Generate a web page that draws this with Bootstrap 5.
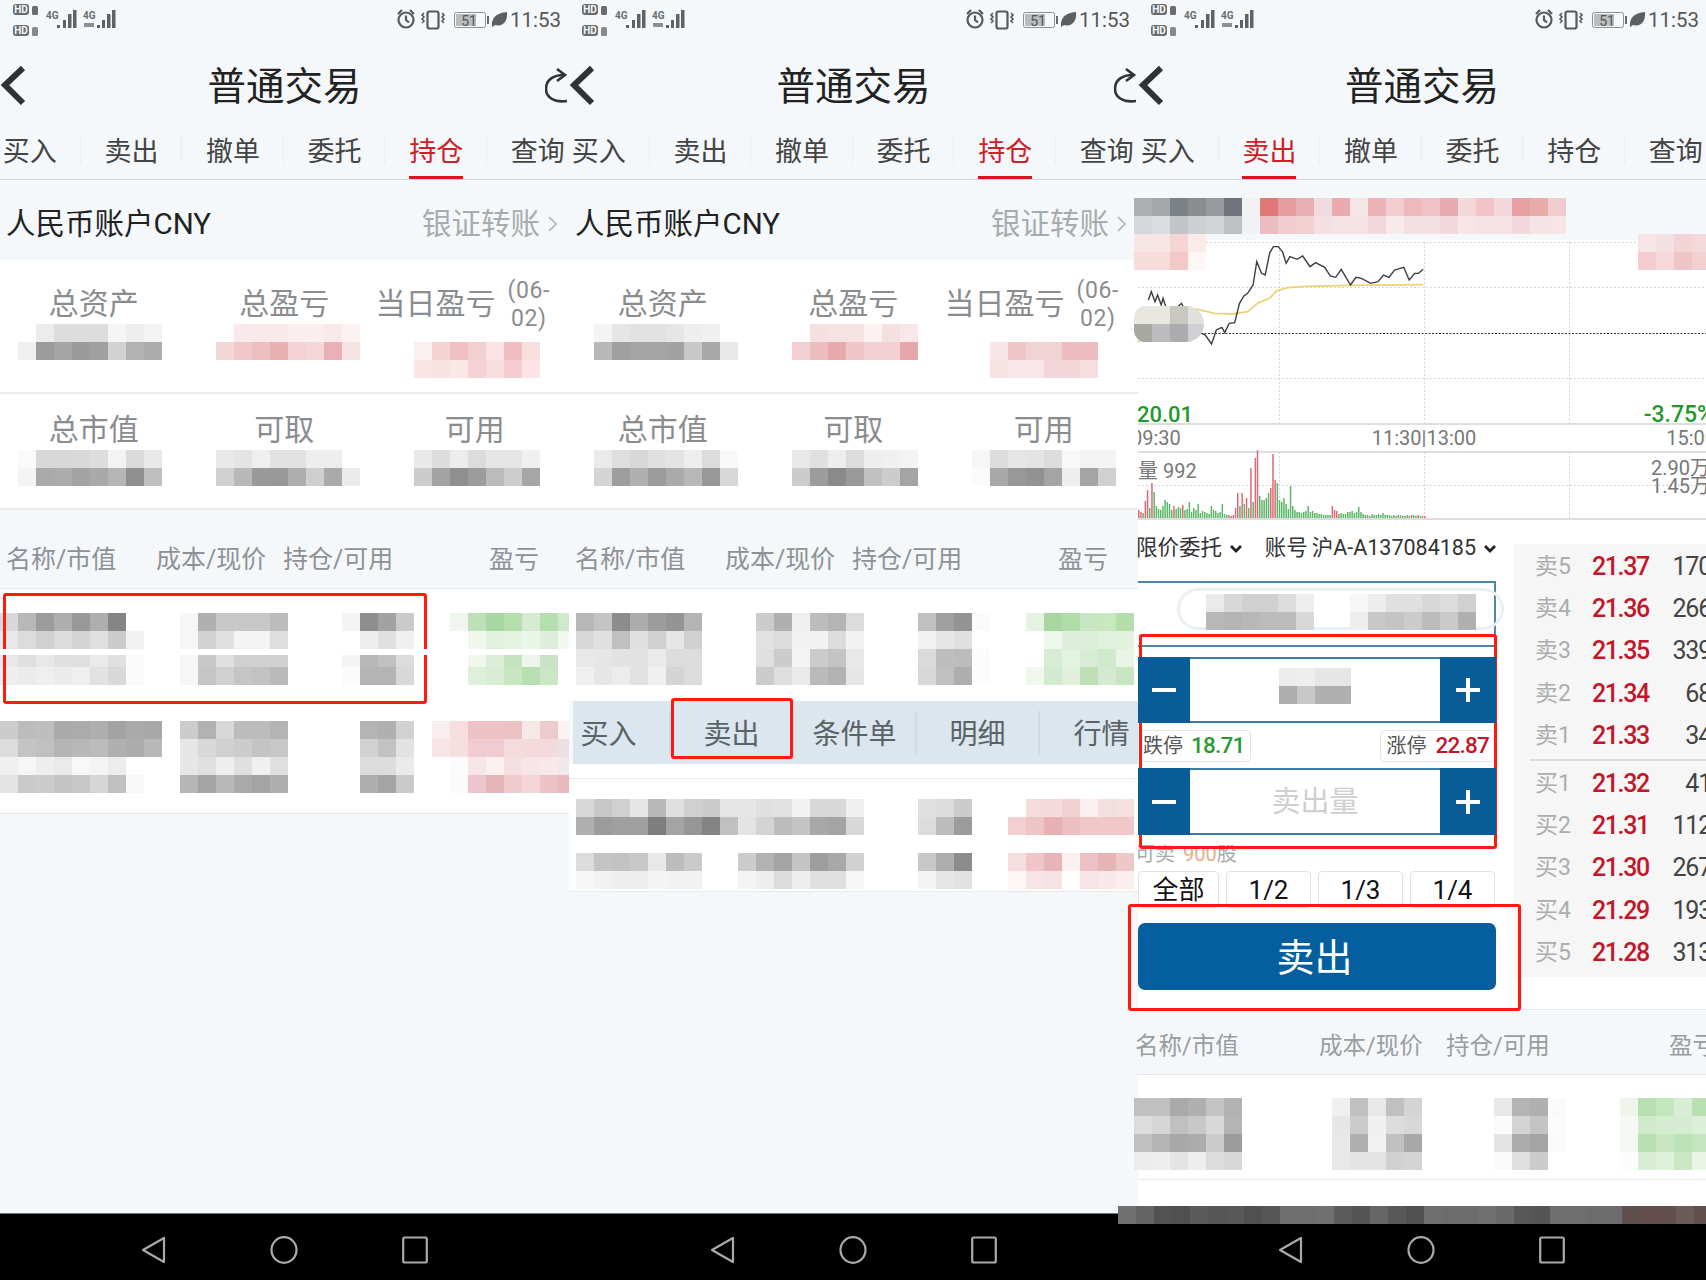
<!DOCTYPE html>
<html lang="zh-CN">
<head>
    <meta charset="UTF-8">
    <title>普通交易</title>
    <meta name="viewport" content="width=device-width, initial-scale=1">
    <link href="https://cdn.jsdelivr.net/npm/bootstrap@5.3.2/dist/css/bootstrap.min.css" rel="stylesheet">
    <style>
        body { margin: 0; background: #000; font-family: Roboto, "Noto Sans CJK SC", sans-serif; }
        .stage { position: relative; width: 1706px; height: 1280px; overflow: hidden; }
        .phone { flex: none; width: 569px; height: 1280px; overflow: hidden; background: #f4f8fb; }
        .phone.last { width: 568px; overflow: visible; }
        .phone-main { height: 1213px; }

        .sbar { height: 46px; }
        .sbar-time { position: absolute; left: 510px; top: 8px; font-size: 20.5px; line-height: 24px; color: #555; }
        .sbar svg { display: block; }
        .sbar-right { left: 394px; }
        .titlebar { height: 80px; display: grid; grid-template-columns: 40px 1fr 40px; align-items: center; }
        .titlebar h1 { margin: 0; padding-top: 2px; font-size: 38.5px; font-weight: 400; color: #222; text-align: center; line-height: 1; }
        .tabs { height: 54px; margin-left: -21px; display: grid; grid-template-columns: repeat(6, 101.6px); border-bottom: 1px solid #d6d9dc; }
        .tab-cell { display: flex; justify-content: center; align-items: stretch; position: relative; font-size: 27px; color: #444; }
        .tab-cell::after { content: ""; position: absolute; right: 0; top: 10px; height: 28px; border-right: 1px solid #eceef0; }
        .tab-cell:last-child::after { display: none; }
        .tab-cell span { display: flex; align-items: center; padding-top: 3px; border-bottom: 3px solid transparent; }
        .tab-cell.on { color: #cf2027; }
        .tab-cell.on span { border-bottom-color: #d7171f; }

        .acct { height: 80px; padding: 8px 11px 0 6px; }
        .acct-name { font-size: 29.5px; color: #222; }
        .acct-link { font-size: 29.5px; color: #a7abae; }
        .sum-card { background: #fff; border-bottom: 2px solid #e8eaec; }
        .sum-a { height: 134px; padding-top: 24px; border-bottom: 2px solid #e8eaec; }
        .sum-b { height: 114px; padding-top: 16px; }
        .sum-labels { height: 40px; margin-left: -1.5px; display: grid; grid-template-columns: repeat(3, 190.5px); font-size: 30px; color: #8a8d90; line-height: 40px; text-align: center; }
        .sum-pair { padding-right: 24px; white-space: nowrap; }
        .sum-date { font-size: 23px; line-height: 28px; width: 48px; margin-top: -7px; margin-left: 12px; letter-spacing: .6px; }
        .strip { display: grid; grid-template-columns: repeat(32, 18px); grid-auto-rows: 18px; }
        .strip i { display: block; }
        .strip.cut::after { content: ""; position: relative; z-index: 1; grid-row: 3; grid-column: 1 / -1; align-self: start; height: 6px; background: #fff; }
        .org2 { margin-left: 7px; }
        .org3 { margin-left: -4px; }

        .list-head { height: 79px; padding: 21px 0 0 6px; display: grid; grid-template-columns: 150px 127px 206px 1fr; align-items: center; font-size: 25px; color: #8e9296; border-bottom: 1px solid #e4e8ec; white-space: nowrap; }
        .list-head.alt { height: 65px; padding: 9px 0 0 0; margin-left: -3px; grid-template-columns: 184px 127px 223px 1fr; font-size: 23.5px; color: #999da1; }
        .pos-row { background: #fff; padding-top: 24px; height: 112px; }
        .pos-row.end { height: 113px; padding-top: 20px; border-bottom: 1px solid #e6e8ea; }
        .act-wrap { margin-left: 4px; height: 63px; background: #dbe6ee; overflow: hidden; }
        .act-bar { margin-left: -25px; height: 63px; display: grid; grid-template-columns: repeat(5, 123px); font-size: 28px; color: #5a6367; align-items: center; text-align: center; }
        .act-bar div { border-right: 2px solid #ced9e1; line-height: 44px; padding-top: 2px; height: 44px; }
        .act-bar div:last-child { border-right: 0; }
        .pos-gap { height: 15px; background: #fff; border-bottom: 1px solid #e6e8ea; }

        .rmark { position: absolute; border: 3px solid #ff1a10; border-radius: 3px; pointer-events: none; }
        .rmark.m1 { left: 3px; top: 593px; width: 424px; height: 111px; }
        .rmark.m2 { left: 671px; top: 698px; width: 122px; height: 61px; }
        .rmark.m3 { left: 1139px; top: 634px; width: 358px; height: 215px; }
        .rmark.m4 { left: 1128px; top: 904px; width: 393px; height: 107px; }

        .head3 { height: 60px; padding-top: 18px; }
        .chart-box { position: relative; height: 280px; background: #fff; }
        .chart-box svg { display: block; }
        .chart-box text { font-family: Roboto, "Noto Sans CJK SC", sans-serif; }
        .over-a { position: absolute; left: -4px; top: -6px; }
        .over-b { position: absolute; left: -4px; top: 66px; width: 70px; overflow: hidden; border-radius: 14px 22px 22px 14px; }
        .form-zone { background: #fff; height: 490px; border-bottom: 1px solid #e6eaee; }
        .form-left { width: 358px; flex: none; }
        .drops { height: 54px; padding-top: 3px; font-size: 21.5px; color: #333; white-space: nowrap; }
        .drops svg { margin-left: 8px; }
        .drop-first { margin-left: -2px; }
        .acc-box { position: relative; height: 66px; width: 358px; border: 2px solid #4a87a8; border-left: 0; padding-top: 11px; margin-top: 7px; }
        .acc-smear { position: absolute; left: 39px; right: -10px; top: 5px; height: 42px; border: 3px solid #e9eff3; border-radius: 21px; }
        .stepper { width: 358px; height: 66px; margin-top: 10px; flex-wrap: nowrap; }
        .stepper.q { margin-top: 6px; height: 67px; }
        .stepper .btn { width: 52px; padding: 0; border: 0; border-radius: 0; background: #085d99; display: flex; align-items: center; justify-content: center; }
        .stepper .btn.plus { width: 56px; }
        .step-mid { flex: 1 1 auto; border: 0; border-top: 2px solid #3d7da3; border-bottom: 2px solid #3d7da3; border-radius: 0; padding: 0 0 8px; display: flex; align-items: center; justify-content: center; background: #fff; }
        .strip-s { grid-template-columns: repeat(4, 18px); }
        .step-ph { padding: 2px 0 0; font-size: 29px; color: #cfcfcf; }
        .limits { margin-top: 7px; height: 32px; width: 358px; font-size: 20px; color: #555; }
        .limit-box { border: 1px solid #e2e4e6; border-radius: 5px; height: 32px; display: flex; align-items: center; padding: 0 6px; gap: 9px; }
        .limit-box.low { border-left: 0; padding-left: 5px; gap: 8px; }
        .limit-box b { font-weight: 500; font-size: 22.5px; letter-spacing: -.8px; }
        .limit-d { color: #2a9a35; }
        .limit-u { color: #c4162a; }
        .avail { margin-top: 10px; height: 19px; font-size: 20px; line-height: 19px; color: #a9a9a9; text-indent: -3px; overflow: hidden; }
        .avail em { font-style: normal; color: #eeaa8c; margin-left: 8px; }
        .ratios { margin-top: 7px; width: 358px; display: grid; grid-template-columns: 81px 85px 85px 85px; column-gap: 7px; }
        .ratios .btn { height: 37px; padding: 2px 0 0; border: 1px solid #e0e2e4; border-radius: 4px; font-size: 26px; line-height: 33px; color: #111; background: #fff; }
        .btn-sell { display: block; margin-top: 15px; width: 358px; height: 67px; padding: 3px 5px 0 0; border: 0; border-radius: 7px; background: #055f9e; color: #fff; font-size: 38px; line-height: 1; }
        .book { margin-top: 24px; margin-left: 18px; width: 192px; height: 433px; background: #f6f6f6; padding: 2px 0 0 21px; overflow: visible; }
        .book-row { height: 42.2px; font-size: 25px; line-height: 42px; white-space: nowrap; }
        .book-row .bk { width: 57px; color: #aaaeb0; font-size: 23px; }
        .book-row .bp { width: 60px; color: #c4162a; font-weight: 500; letter-spacing: -1.4px; }
        .book-row .bq { margin-left: auto; margin-right: -5px; color: #444; letter-spacing: -1.2px; }
        .book-line { height: 2px; margin: 2px 0 2px -5px; background: #dcdcdc; }
        .pos3 { background: #fff; height: 138px; padding-top: 23px; }
        .pos3-line { border-top: 1px solid #e8eaec; margin-top: 9px; }
        .dark-strip { position: absolute; left: 1118px; top: 1206px; grid-template-columns: repeat(33, 18px); }

        .navbar-phone { height: 67px; background: #000; border-top: 1px solid #777; gap: 104px; padding: 6px 2px 0 0; }
        .sym-host { position: absolute; width: 0; height: 0; }
    </style>
</head>
<body>
<svg class="sym-host" aria-hidden="true">
    <symbol id="st-left" viewBox="0 0 120 40">
        <rect x="13" y="4" width="16" height="11" rx="3" fill="#696d70"/>
        <text x="21" y="13" font-size="10" font-weight="700" text-anchor="middle" fill="#f4f8fb" font-family="Roboto">HD</text>
        <rect x="32" y="6" width="6" height="9" rx="1.5" fill="#696d70"/>
        <rect x="13" y="25" width="16" height="11" rx="3" fill="#696d70"/>
        <text x="21" y="34" font-size="10" font-weight="700" text-anchor="middle" fill="#f4f8fb" font-family="Roboto">HD</text>
        <rect x="32" y="27" width="6" height="9" rx="1.5" fill="#85898c"/>
        <text x="46" y="19" font-size="10" font-weight="700" fill="#696d70" font-family="Roboto">4G</text>
        <g fill="#5e6265">
            <rect x="57" y="25" width="3" height="3"/><rect x="63" y="20" width="3" height="8"/><rect x="68" y="14" width="3.5" height="14"/><rect x="73" y="10" width="3.5" height="18"/>
        </g>
        <text x="83" y="19" font-size="10" font-weight="700" fill="#696d70" font-family="Roboto">4G</text>
        <g fill="#5e6265">
            <rect x="84" y="23" width="10" height="4" fill="#8c9093"/><rect x="97" y="25" width="3" height="3"/><rect x="102" y="20" width="3" height="8"/><rect x="107" y="14" width="3.5" height="14"/><rect x="112" y="10" width="3.5" height="18"/>
        </g>
    </symbol>
    <symbol id="st-right" viewBox="0 0 120 40">
        <g fill="none" stroke="#58595b" stroke-width="2.2">
            <circle cx="12" cy="20" r="7.5"/>
            <path d="M12 15.5V20l3 2.5M4 14l4-4M20 14l-4-4"/>
            <rect x="33.5" y="11.5" width="11" height="17" rx="2"/>
            <path d="M30 13l-2 2 2 2-2 2 2 2-2 2M48 13l2 2-2 2 2 2-2 2 2 2" stroke-width="1.6"/>
        </g>
        <rect x="60.5" y="12.5" width="31" height="15" rx="2" fill="#f4f8fb" stroke="#8d9194"/>
        <rect x="62" y="14" width="20" height="12" fill="#b9bcbe"/>
        <rect x="93" y="16" width="2" height="8" fill="#68696b"/>
        <text x="75" y="25.5" font-size="14" text-anchor="middle" fill="#555" font-family="Roboto">51</text>
        <path d="M98 27c-1-9 4-14 15-15 1 9-4 15-12 13z" fill="#5d5f61"/>
    </symbol>
    <symbol id="ic-back" viewBox="0 0 30 44">
        <path d="M23 4L5 21l18 18" fill="none" stroke="#2f3235" stroke-width="6"/>
    </symbol>
    <symbol id="ic-refresh" viewBox="0 0 24 36">
        <path d="M19 6C8 6 1 11 1 20c0 8 8 14 21 12" fill="none" stroke="#333" stroke-width="2.6" transform="translate(0 1)"/>
        <path d="M12 1l8 6-8 6" fill="none" stroke="#333" stroke-width="2.6"/>
    </symbol>
    <symbol id="ic-minus" viewBox="0 0 24 24"><rect x="0" y="10" width="24" height="4" fill="#fff"/></symbol>
    <symbol id="ic-plus" viewBox="0 0 24 24"><path d="M10 0h4v10h10v4H14v10h-4V14H0v-4h10z" fill="#fff"/></symbol>
    <symbol id="ic-down" viewBox="0 0 12 8"><path d="M1 1l5 5 5-5" fill="none" stroke="#222" stroke-width="2.8"/></symbol>
    <symbol id="ic-gt" viewBox="0 0 10 16"><path d="M1 1l7 7-7 7" fill="none" stroke="#aeb2b5" stroke-width="1.6"/></symbol>
    <symbol id="nav-back" viewBox="0 0 26 28"><path d="M24 2v24L3 14z" fill="none" stroke="#aaa" stroke-width="2.2" stroke-linejoin="round"/></symbol>
    <symbol id="nav-home" viewBox="0 0 28 28"><ellipse cx="14" cy="14" rx="12.5" ry="12.8" fill="none" stroke="#aaa" stroke-width="2.2"/></symbol>
    <symbol id="nav-recent" viewBox="0 0 26 28"><rect x="1.2" y="1.5" width="23.6" height="25" rx="1.5" fill="none" stroke="#aaa" stroke-width="2.2"/></symbol>
</svg>

<div class="stage d-flex">

    <!-- left: positions -->
    <div class="phone position-relative">
        <div class="phone-main">
            <div class="sbar position-relative">
                <svg width="120" height="40"><use href="#st-left"/></svg>
                <svg class="position-absolute top-0 sbar-right" width="120" height="40"><use href="#st-right"/></svg>
                <span class="sbar-time">11:53</span>
            </div>
            <div class="titlebar">
                <svg width="30" height="44"><use href="#ic-back"/></svg>
                <h1>普通交易</h1>
                <svg class="ms-auto" width="24" height="36"><use href="#ic-refresh"/></svg>
            </div>
            <div class="tabs">
                <div class="tab-cell"><span>买入</span></div>
                <div class="tab-cell"><span>卖出</span></div>
                <div class="tab-cell"><span>撤单</span></div>
                <div class="tab-cell"><span>委托</span></div>
                <div class="tab-cell on"><span>持仓</span></div>
                <div class="tab-cell"><span>查询</span></div>
            </div>
            <div class="acct d-flex justify-content-between align-items-center">
                <span class="acct-name">人民币账户CNY</span>
                <span class="acct-link d-flex align-items-center gap-2">银证转账<svg width="10" height="16"><use href="#ic-gt"/></svg></span>
            </div>
            <div class="sum-card">
                <div class="sum-a">
                    <div class="sum-labels">
                        <div>总资产</div><div>总盈亏</div>
                        <div class="sum-pair d-flex justify-content-center"><span>当日盈亏</span><span class="sum-date">(06-<br>02)</span></div>
                    </div>
                    <div class="strip" data-s="s1a"></div>
                </div>
                <div class="sum-b">
                    <div class="sum-labels"><div>总市值</div><div>可取</div><div>可用</div></div>
                    <div class="strip" data-s="s1b"></div>
                </div>
            </div>
            <div class="list-head"><span>名称/市值</span><span>成本/现价</span><span>持仓/可用</span><span>盈亏</span></div>
            <div class="pos-row"><div class="strip cut" data-s="p1a"></div></div>
            <div class="pos-row end"><div class="strip" data-s="p1b"></div></div>
        </div>
        <div class="navbar-phone d-flex justify-content-center align-items-center">
            <svg width="26" height="28"><use href="#nav-back"/></svg>
            <svg width="28" height="28"><use href="#nav-home"/></svg>
            <svg width="26" height="28"><use href="#nav-recent"/></svg>
        </div>
    </div>

    <!-- middle: positions with action bar -->
    <div class="phone position-relative">
        <div class="phone-main">
            <div class="sbar position-relative">
                <svg width="120" height="40"><use href="#st-left"/></svg>
                <svg class="position-absolute top-0 sbar-right" width="120" height="40"><use href="#st-right"/></svg>
                <span class="sbar-time">11:53</span>
            </div>
            <div class="titlebar">
                <svg width="30" height="44"><use href="#ic-back"/></svg>
                <h1>普通交易</h1>
                <svg class="ms-auto" width="24" height="36"><use href="#ic-refresh"/></svg>
            </div>
            <div class="tabs">
                <div class="tab-cell"><span>买入</span></div>
                <div class="tab-cell"><span>卖出</span></div>
                <div class="tab-cell"><span>撤单</span></div>
                <div class="tab-cell"><span>委托</span></div>
                <div class="tab-cell on"><span>持仓</span></div>
                <div class="tab-cell"><span>查询</span></div>
            </div>
            <div class="acct d-flex justify-content-between align-items-center">
                <span class="acct-name">人民币账户CNY</span>
                <span class="acct-link d-flex align-items-center gap-2">银证转账<svg width="10" height="16"><use href="#ic-gt"/></svg></span>
            </div>
            <div class="sum-card">
                <div class="sum-a">
                    <div class="sum-labels">
                        <div>总资产</div><div>总盈亏</div>
                        <div class="sum-pair d-flex justify-content-center"><span>当日盈亏</span><span class="sum-date">(06-<br>02)</span></div>
                    </div>
                    <div class="strip org2" data-s="s2a"></div>
                </div>
                <div class="sum-b">
                    <div class="sum-labels"><div>总市值</div><div>可取</div><div>可用</div></div>
                    <div class="strip org2" data-s="s2b"></div>
                </div>
            </div>
            <div class="list-head"><span>名称/市值</span><span>成本/现价</span><span>持仓/可用</span><span>盈亏</span></div>
            <div class="pos-row"><div class="strip org2" data-s="p2a"></div></div>
            <div class="act-wrap">
                <div class="act-bar"><div>买入</div><div>卖出</div><div>条件单</div><div>明细</div><div>行情</div></div>
            </div>
            <div class="pos-gap"></div>
            <div class="pos-row end"><div class="strip org2" data-s="p2b"></div></div>
        </div>
        <div class="navbar-phone d-flex justify-content-center align-items-center">
            <svg width="26" height="28"><use href="#nav-back"/></svg>
            <svg width="28" height="28"><use href="#nav-home"/></svg>
            <svg width="26" height="28"><use href="#nav-recent"/></svg>
        </div>
    </div>

    <!-- right: sell form -->
    <div class="phone last position-relative">
        <div class="phone-main">
            <div class="sbar position-relative">
                <svg width="120" height="40"><use href="#st-left"/></svg>
                <svg class="position-absolute top-0 sbar-right" width="120" height="40"><use href="#st-right"/></svg>
                <span class="sbar-time">11:53</span>
            </div>
            <div class="titlebar">
                <svg width="30" height="44"><use href="#ic-back"/></svg>
                <h1>普通交易</h1>
                <span></span>
            </div>
            <div class="tabs">
                <div class="tab-cell"><span>买入</span></div>
                <div class="tab-cell on"><span>卖出</span></div>
                <div class="tab-cell"><span>撤单</span></div>
                <div class="tab-cell"><span>委托</span></div>
                <div class="tab-cell"><span>持仓</span></div>
                <div class="tab-cell"><span>查询</span></div>
            </div>
            <div class="head3"><div class="strip org3" data-s="h3"></div></div>
            <div class="chart-box">
                <svg id="chart" width="569" height="280">
                    <g stroke="#d4d6d8" stroke-width="1" stroke-dasharray="2 2" fill="none">
                        <path d="M0 2.5H569M0 47.5H569M0 138.5H569M0 245.5H569"/>
                        <path d="M141.5 2V184M286.5 2V184M431.5 2V184M141.5 212V279M286.5 212V279M431.5 212V279"/>
                    </g>
                    <path d="M0 93.5H569" stroke="#333" stroke-dasharray="2 1.5" fill="none"/>
                    <path d="M0 184H569M0 212H569M0 279H569" stroke="#d0d2d4" stroke-width="1.5" fill="none"/>
                    <g transform="translate(-8 -50) scale(.3674 .3333)" fill="none">
                        <polyline vector-effect="non-scaling-stroke" stroke="#ecd27a" stroke-width="1.8" points="20,458 60,420 100,370 150,352 190,360 230,370 280,372 320,365 350,338 380,325 400,302 430,293 480,289 600,286 798,284"/>
                        <polyline vector-effect="non-scaling-stroke" stroke="#3c3e42" stroke-width="1.4" points="50,330 58,305 68,335 75,315 85,345 90,325 100,360 130,350 140,340 150,360 190,428 205,435 222,462 235,420 250,412 258,428 270,400 285,398 298,340 310,318 320,310 335,285 345,215 358,250 368,255 380,190 390,170 403,170 415,185 425,220 435,200 455,208 470,198 490,230 505,218 530,232 545,258 560,262 575,238 600,285 615,262 630,265 655,280 675,275 690,255 705,262 720,240 745,232 760,270 775,250 785,250 798,238"/>
                    </g>
                    <g id="vol"></g>
                    <text x="-1" y="182" font-size="22" font-weight="500" fill="#1f9a2a">20.01</text>
                    <text x="576" y="182" font-size="23" font-weight="500" fill="#1f9a2a" text-anchor="end">-3.75%</text>
                    <g font-size="20" fill="#777">
                        <text x="-7" y="205">09:30</text>
                        <text x="286" y="205" text-anchor="middle">11:30|13:00</text>
                        <text x="578" y="205" text-anchor="end">15:00</text>
                        <text x="0" y="238">量 992</text>
                        <text x="572" y="235" text-anchor="end">2.90万</text>
                        <text x="572" y="253" text-anchor="end">1.45万</text>
                    </g>
                </svg>
                <div class="strip over-a" data-s="c3a"></div>
                <div class="strip over-b" data-s="c3b"></div>
            </div>
            <div class="form-zone d-flex">
                <div class="form-left">
                    <div class="drops d-flex align-items-center">
                        <span class="drop-first d-flex align-items-center">限价委托<svg width="12" height="8"><use href="#ic-down"/></svg></span>
                        <span class="d-flex align-items-center ms-auto">账号<span class="ms-1">沪A-A137084185</span><svg width="12" height="8"><use href="#ic-down"/></svg></span>
                    </div>
                    <div class="acc-box">
                        <div class="acc-smear"></div>
                        <div class="strip org3 position-relative" data-s="a3"></div>
                    </div>
                    <div class="input-group stepper">
                        <button class="btn" type="button"><svg width="24" height="24"><use href="#ic-minus"/></svg></button>
                        <div class="form-control step-mid"><div class="strip strip-s" data-s="v3"></div></div>
                        <button class="btn plus" type="button"><svg width="24" height="24"><use href="#ic-plus"/></svg></button>
                    </div>
                    <div class="limits d-flex justify-content-between">
                        <span class="limit-box low">跌停<b class="limit-d">18.71</b></span>
                        <span class="limit-box">涨停<b class="limit-u">22.87</b></span>
                    </div>
                    <div class="input-group stepper q">
                        <button class="btn" type="button"><svg width="24" height="24"><use href="#ic-minus"/></svg></button>
                        <div class="form-control step-mid step-ph">卖出量</div>
                        <button class="btn plus" type="button"><svg width="24" height="24"><use href="#ic-plus"/></svg></button>
                    </div>
                    <div class="avail">可卖<em>900</em>股</div>
                    <div class="ratios">
                        <button class="btn" type="button">全部</button>
                        <button class="btn" type="button">1/2</button>
                        <button class="btn" type="button">1/3</button>
                        <button class="btn" type="button">1/4</button>
                    </div>
                    <button class="btn btn-sell" type="button">卖出</button>
                </div>
                <div class="book">
                    <div class="book-row d-flex"><span class="bk">卖5</span><span class="bp">21.37</span><span class="bq">170</span></div>
                    <div class="book-row d-flex"><span class="bk">卖4</span><span class="bp">21.36</span><span class="bq">266</span></div>
                    <div class="book-row d-flex"><span class="bk">卖3</span><span class="bp">21.35</span><span class="bq">339</span></div>
                    <div class="book-row d-flex"><span class="bk">卖2</span><span class="bp">21.34</span><span class="bq">68</span></div>
                    <div class="book-row d-flex"><span class="bk">卖1</span><span class="bp">21.33</span><span class="bq">34</span></div>
                    <div class="book-line"></div>
                    <div class="book-row d-flex"><span class="bk">买1</span><span class="bp">21.32</span><span class="bq">41</span></div>
                    <div class="book-row d-flex"><span class="bk">买2</span><span class="bp">21.31</span><span class="bq">112</span></div>
                    <div class="book-row d-flex"><span class="bk">买3</span><span class="bp">21.30</span><span class="bq">267</span></div>
                    <div class="book-row d-flex"><span class="bk">买4</span><span class="bp">21.29</span><span class="bq">193</span></div>
                    <div class="book-row d-flex"><span class="bk">买5</span><span class="bp">21.28</span><span class="bq">313</span></div>
                </div>
            </div>
            <div class="list-head alt"><span>名称/市值</span><span>成本/现价</span><span>持仓/可用</span><span>盈亏</span></div>
            <div class="pos3">
                <div class="strip org3" data-s="p3"></div>
                <div class="pos3-line"></div>
            </div>
        </div>
        <div class="navbar-phone d-flex justify-content-center align-items-center">
            <svg width="26" height="28"><use href="#nav-back"/></svg>
            <svg width="28" height="28"><use href="#nav-home"/></svg>
            <svg width="26" height="28"><use href="#nav-recent"/></svg>
        </div>
    </div>

    <div class="rmark m1"></div>
    <div class="rmark m2"></div>
    <div class="rmark m3"></div>
    <div class="rmark m4"></div>
    <div class="strip dark-strip" data-s="dk"></div>
</div>

<script src="https://cdn.jsdelivr.net/npm/bootstrap@5.3.2/dist/js/bootstrap.bundle.min.js"></script>
<script>
    // censored areas: [start column, rows], one token per 18px cell, _ = empty
    const strips = {
        s1a: [
            [1, ['_ ec dd dd dd f5 ee f3', 'f0 9c a4 9b a0 d2 b2 ac']],
            [12, ['_ fae9ea fae9ea fae9ea fbeeee fbeeee fae9ea fcf2f2', 'f4d6d8 f1c8ca edbfc0 e9b0b2 f3d2d5 f3d7d9 e9b1b5 f8e1e3']],
            [23, ['_ _ _ _ _ _ _', 'fbf0f0 f4d3d5 f0bfc3 f2cfd0 fae3e5 f0bdc2 fadfe1', 'f9e3e5 f9e0e2 fbe6e8 f5d2d6 f8dde0 f5cdd0 fbe3e6']]
        ],
        s1b: [
            [1, ['fa d8 d8 d9 dd f3 db e8', 'f4 aa ac a3 a9 b6 8f bf']],
            [12, ['e8 e4 ef e2 e2 ee ee', 'd0 b8 99 98 ae cf aa eb']],
            [23, ['e9 dd ec dc e6 e6 f0', 'cc a3 8f 9c bb cd a6']]
        ],
        p1a: [
            [0, ['d8 b8 9c ae 98 ae 85', 'e8 dc d0 dc d4 e0 cc f2', 'e8 e0 e8 e0 e0 ea e0 fb', 'ee eb ef eb ef e2 d8 fa']],
            [10, ['f6 b0 c8 c8 c8 bc', 'f6 d2 e0 f4 f4 de', 'f6 c8 e0 d0 d0 d0', 'f6 c6 d0 c6 c2 ba']],
            [19, ['f4 8e a2 ca', '_ ee e0 f0', 'f4 b8 c0 dc', 'fb b4 b4 d8']],
            [25, ['eff6ee bde0b8 a8d8a2 b5e0ad d4ebd0 b5e0ad d0e8cc', '_ f0f8ee e2f2de e4f2e0 eaf4e8 ddeedb f2f8f0', '_ f0f8ee dceed8 c4e4bf eef6ec c8e4c4', '_ dff0da d8edd4 c8e6c2 b8dfb2 cae6c4']]
        ],
        p1b: [
            [0, ['cc bc be aa ab ae a3 aa a8', 'dc c4 c0 b4 b8 bc b0 ac b8', 'f0 f6 ee ea f8 f4 ec', 'e4 ca cc c4 c8 d6 c0 f8']],
            [10, ['cc b2 d8 bc bc b4', 'e6 d8 d0 cc c4 c8', 'e6 e0 ee e0 f0 e0', 'b6 a4 b8 aa a4 ae']],
            [20, ['b4 b0 d2', 'd2 c2 e2', 'dc dc ea', 'ae a4 ca']],
            [24, ['f8eeee f5dde0 ecc2c4 ecc2c4 ebc2c4 f7e8e8 edcacb fbf2f2', 'f6e4e6 f6dee1 f0cbd1 f0cbd1 f4dbdd f4dadc f4dadc ece0e4', '_ fcfcfc f6e6e8 faf0f0 f5dfe1 f7e5e7 f8e8e9 f0e8ea', '_ fbfbfb ecc6cc e6b5ba efcace f4d4d8 edc2c6 e8babe']]
        ],
        s2a: [
            [1, ['f4 e6 e2 e2 e6 ee f0', 'b8 a0 a4 a4 a2 c8 a8 e8']],
            [12, ['_ f6dfe1 f6e2e3 f6e2e3 fcf2f2 f6dfe1 f8e7e8', 'f2cfd3 edbdc0 e6a9ac f0c6c9 f2d0d4 f2d0d4 e6a7ac']],
            [23, ['_ _ _ _ _ _', 'f8e5e7 f0c6ca f2d3d5 f2d3d5 eebcc0 eebcc0', 'f6e1e3 f8e6e8 f8e6e8 f4d5d9 f4d5d9 f6dde0']]
        ],
        s2b: [
            [1, ['ea de d8 e0 e4 ee dc f8', 'd4 9e b0 9c aa b8 98 d8']],
            [12, ['e8 e0 ee dc ee f0 f4', 'cc 9c 8a 9a c0 cc a4']],
            [22, ['f6 dc e6 e4 dc f8 f4 f4', 'fa a8 98 92 a4 ee a4 d0']]
        ],
        p2a: [
            [0, ['b8 c4 8c ac 9c 94 b4', 'd8 e0 c0 e0 d0 e6 d0', 'e8 e6 e2 e2 ea dc dc', 'f0 e6 ec e2 f0 d4 dc']],
            [10, ['cc b0 f0 bc b4 dc', 'e2 dc f2 f2 dc f2', 'e0 cc f4 cc c4 e8', 'cc de ea ba b2 e6']],
            [19, ['c0 a0 94 fa', 'f2 e6 e0', 'da be bc fc', 'd8 c0 ae fc']],
            [25, ['e4f2e2 a8d8a0 b0dca8 c8e6c4 c8e8c0 b4dfaa', '_ eef7ec dcefd8 dcefd8 e0f2dc e0f2dc', '_ d8ecd4 e4f2e0 d8ecd4 d0e8cc e8f4e6', 'f0f8ee d4ead0 e0f0dc bcdfb4 d4ead0 c8e6c2']]
        ],
        p2b: [
            [0, ['d8 c8 d0 e6 b8 e0 d0 cc e6 e6 e0 e2 f2 d8 d8 f0', 'b0 9c a0 a0 7e a4 96 84 c0 e4 d4 bc c4 a8 a4 d8', '_', 'dc c4 c2 c8 e8 bc ca _ _ cc b2 a4 c4 9e a8 d0', 'f6 f2 ee ee f4 f2 f2 _ _ f4 ee dc ee e0 e0 f6']],
            [19, ['e0 dc cc', 'dc bc 9c', '_', 'c8 ae 8c', 'f4 e6 e2']],
            [24, ['_ f4dcdc f4dada f0d0d0 fbefef f4dfe0 f6e0e0', 'f2d0d2 eec4c6 e8b0b2 ecc0c2 f0c8c8 f0c8c8 f0c8c8', '_', 'f6dde0 f0c4c8 e8b4b8 fbf0f0 ecc0c4 e6b4b4 eec8c8', 'fdf6f6 f8e4e6 f6e2e2 _ f8e4e6 f8e8e8 fbeeee']]
        ],
        h3: [
            [0, ['adafb1 a4a8ab 7c8185 8a8e91 979a9e 71747b f0f2f4', 'd4d8da dbdedf c2c6c9 ccd0d2 d2d5d7 bec0c4 f0f2f4']],
            [7, ['e07878 e49c9c e8b0b2 f0dcdf eaaaae f4e6e6 ecb4b6 f2ced2 eeb8bc eec2c6 e8acb0 f2d8d8 f0c4c8 f2d8da e8a0a4 eaaca8 f0ccd0', 'ecbcc0 f0ccd0 f2d0d2 f4e0e4 f6e2e4 f6e2e4 f2d8dc f6eaea f4dfe2 f4dfe2 f2d8dc f6e6e8 f4e2e4 f4e2e4 f2d8dc f6e4e4 f6e4e6']]
        ],
        c3a: [
            [0, ['f6e6e6 f6e6e6 f4d4d4 fbeaea', 'f8dcdc f8dcdc f4c8c8 fff6f6']],
            [28, ['f6e4e6 f4e0e2 f2d4d6 f4d8dc', 'f5ccd0 f6d8dc f0c4c6 f2d0d2']]
        ],
        c3b: [
            [0, ['e8e8e0 e8e8e0 c8c8c0 e0e0dc', 'a8a8a2 bcbcbe acacae d0d0d2']]
        ],
        a3: [
            [4, ['ea d8 d0 d0 dc ee', 'b8 b4 b8 bc bc d8']],
            [12, ['f6 ec e0 e0 d8 dc d0', 'ee c8 c4 cc bc ca b0']]
        ],
        v3: [[0, ['ec ee e6 e6', 'ae c8 b0 b0']]],
        p3: [
            [0, ['c0 c0 aa b0 c4 b2', 'dc d6 c0 c8 d8 b4', 'c0 b4 a8 ac cc 9c', 'ec ee e4 ee dc d8']],
            [11, ['f0 c0 e8 c0 d4', 'e6 cc f0 dc d8', 'e8 b0 f2 c0 a8', 'e8 e4 e4 d0 d4']],
            [20, ['e8 b4 b0 fa', 'fa d4 c4 fc', 'e4 ac a4 fa', 'fa e0 cc']],
            [27, ['eef6ec b8dfb2 c4e6bf d8eed4 b8e0b0', 'f4faf2 cfe9ca d4ecd0 d4ecd0 dcefd8', 'f4faf2 b8e0b2 c8e6c2 bde2b7 c4e6be', 'fafdfa d8eed4 dff1db cae8c4 eaf5e8']]
        ],
        dk: [
            [0, ['70 64 52 50 5a 56 58 50 56 6e 6e 70 5c 54 66 58 50 6e 6c 6c 70 6a 58 54 6e 6e 6c 6c 5e4e4e 654f4e 654f4e 6a5a5a 624e4e']]
        ]
    };

    document.querySelectorAll('.strip').forEach(el => {
        strips[el.dataset.s].forEach(([at, rows]) => {
            rows.forEach((row, r) => {
                row.split(' ').forEach((c, i) => {
                    if (c === '_') return;
                    const cell = document.createElement('i');
                    cell.style.background = '#' + (c.length === 2 ? c + c + c : c);
                    cell.style.gridColumn = at + i + 1;
                    cell.style.gridRow = r + 1;
                    el.append(cell);
                });
            });
        });
    });

    // volume bars, positive red, negative green
    const vols = [8,6,-5,17,28,-10,35,-26,-12,-9,-8,-12,-18,-16,-14,-8,12,-9,-11,-10,13,-8,-9,-16,-6,-10,-8,-14,-5,-7,-6,-5,-4,-12,-8,-7,-5,-6,-14,-4,-3,3,2,3,10,25,-12,25,-14,20,-10,50,-16,60,68,-22,-18,-18,-20,-25,30,64,38,-35,-18,-16,-20,-14,-9,-32,-12,-8,-6,-6,-5,-6,-7,-12,-6,-7,-5,-5,-4,-4,-3,-3,-3,-3,12,8,7,-4,-5,-4,-4,-6,-6,-7,-5,-6,-11,-6,-4,-3,-3,2,-4,-3,-3,-4,-3,-5,-3,-3,-3,-2,-3,2,-3,-3,-2,2,-3,-2,3,-3,-2,3,-2,2,2];
    const volG = document.getElementById('vol');
    let volHtml = '';
    vols.forEach((v, i) => {
        const h = Math.abs(v);
        volHtml += `<rect x="${(i * 2.2).toFixed(1)}" y="${278 - h}" width="1.5" height="${h}" fill="${v > 0 ? '#dc6a76' : '#5cb868'}"/>`;
    });
    volG.innerHTML = volHtml;
</script>
</body>
</html>
